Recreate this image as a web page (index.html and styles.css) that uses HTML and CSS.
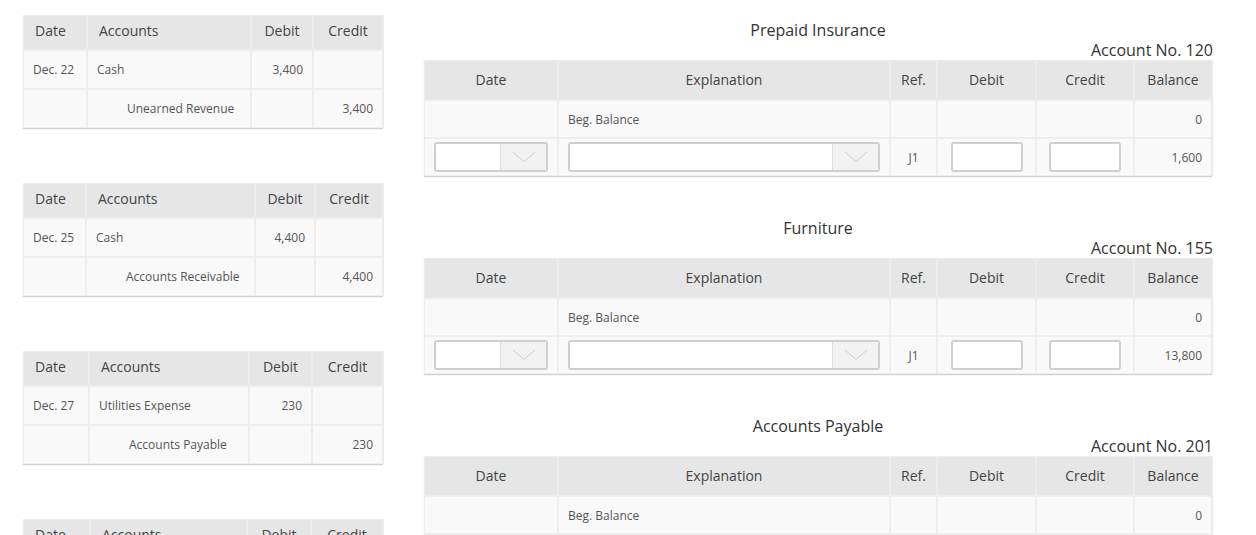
FILE: index.html
```html
<!DOCTYPE html>
<html>
<head>
<meta charset="utf-8">
<link rel="stylesheet" href="styles.css">
</head>
<body>
<div class="page">
  <div class="journal">
    <table class="jt">
      <colgroup><col class="a1"><col class="b1"><col class="c1"><col class="d1"></colgroup>
      <thead><tr><th>Date</th><th>Accounts</th><th class="jn">Debit</th><th class="jn">Credit</th></tr></thead>
      <tbody>
        <tr><td>Dec. 22</td><td>Cash</td><td class="num">3,400</td><td></td></tr>
        <tr><td></td><td class="ind">Unearned Revenue</td><td></td><td class="num">3,400</td></tr>
      </tbody>
    </table>
    <table class="jt">
      <colgroup><col class="a2"><col class="b2"><col class="c2"><col class="d2"></colgroup>
      <thead><tr><th>Date</th><th>Accounts</th><th class="jn">Debit</th><th class="jn">Credit</th></tr></thead>
      <tbody>
        <tr><td>Dec. 25</td><td>Cash</td><td class="num">4,400</td><td></td></tr>
        <tr><td></td><td class="ind">Accounts Receivable</td><td></td><td class="num">4,400</td></tr>
      </tbody>
    </table>
    <table class="jt">
      <colgroup><col class="a3"><col class="b3"><col class="c3"><col class="d3"></colgroup>
      <thead><tr><th>Date</th><th>Accounts</th><th class="jn">Debit</th><th class="jn">Credit</th></tr></thead>
      <tbody>
        <tr><td>Dec. 27</td><td>Utilities Expense</td><td class="num">230</td><td></td></tr>
        <tr><td></td><td class="ind">Accounts Payable</td><td></td><td class="num">230</td></tr>
      </tbody>
    </table>
    <table class="jt">
      <colgroup><col class="a4"><col class="b4"><col class="c4"><col class="d4"></colgroup>
      <thead><tr><th>Date</th><th>Accounts</th><th class="jn">Debit</th><th class="jn">Credit</th></tr></thead>
      <tbody>
        <tr><td>Dec. 31</td><td>Cash</td><td class="num">1,000</td><td></td></tr>
        <tr><td></td><td class="ind">Service Revenue</td><td></td><td class="num">1,000</td></tr>
      </tbody>
    </table>
  </div>

  <div class="ledgers">
    <section class="ledger">
      <h2 class="ltitle">Prepaid Insurance</h2>
      <div class="lno">Account No. 120</div>
      <table class="lt">
        <colgroup><col class="c-date"><col class="c-exp"><col class="c-ref"><col class="c-deb"><col class="c-cre"><col class="c-bal"></colgroup>
        <thead><tr><th>Date</th><th>Explanation</th><th>Ref.</th><th>Debit</th><th>Credit</th><th>Balance</th></tr></thead>
        <tbody>
          <tr><td></td><td>Beg. Balance</td><td></td><td></td><td></td><td class="num">0</td></tr>
          <tr>
            <td><div class="sel"><span class="sel-val"></span><span class="sel-btn"><svg width="24" height="12" viewBox="0 0 24 12"><polyline points="1,1 12,10.5 23,1" fill="none" stroke="#cdcdcd" stroke-width="1"/></svg></span></div></td>
            <td><div class="sel"><span class="sel-val"></span><span class="sel-btn"><svg width="24" height="12" viewBox="0 0 24 12"><polyline points="1,1 12,10.5 23,1" fill="none" stroke="#cdcdcd" stroke-width="1"/></svg></span></div></td>
            <td class="ctr">J1</td>
            <td class="ctr"><span class="inp"></span></td>
            <td class="ctr"><span class="inp"></span></td>
            <td class="num">1,600</td>
          </tr>
        </tbody>
      </table>
    </section>

    <section class="ledger">
      <h2 class="ltitle">Furniture</h2>
      <div class="lno">Account No. 155</div>
      <table class="lt">
        <colgroup><col class="c-date"><col class="c-exp"><col class="c-ref"><col class="c-deb"><col class="c-cre"><col class="c-bal"></colgroup>
        <thead><tr><th>Date</th><th>Explanation</th><th>Ref.</th><th>Debit</th><th>Credit</th><th>Balance</th></tr></thead>
        <tbody>
          <tr><td></td><td>Beg. Balance</td><td></td><td></td><td></td><td class="num">0</td></tr>
          <tr>
            <td><div class="sel"><span class="sel-val"></span><span class="sel-btn"><svg width="24" height="12" viewBox="0 0 24 12"><polyline points="1,1 12,10.5 23,1" fill="none" stroke="#cdcdcd" stroke-width="1"/></svg></span></div></td>
            <td><div class="sel"><span class="sel-val"></span><span class="sel-btn"><svg width="24" height="12" viewBox="0 0 24 12"><polyline points="1,1 12,10.5 23,1" fill="none" stroke="#cdcdcd" stroke-width="1"/></svg></span></div></td>
            <td class="ctr">J1</td>
            <td class="ctr"><span class="inp"></span></td>
            <td class="ctr"><span class="inp"></span></td>
            <td class="num">13,800</td>
          </tr>
        </tbody>
      </table>
    </section>

    <section class="ledger">
      <h2 class="ltitle">Accounts Payable</h2>
      <div class="lno">Account No. 201</div>
      <table class="lt">
        <colgroup><col class="c-date"><col class="c-exp"><col class="c-ref"><col class="c-deb"><col class="c-cre"><col class="c-bal"></colgroup>
        <thead><tr><th>Date</th><th>Explanation</th><th>Ref.</th><th>Debit</th><th>Credit</th><th>Balance</th></tr></thead>
        <tbody>
          <tr><td></td><td>Beg. Balance</td><td></td><td></td><td></td><td class="num">0</td></tr>
          <tr>
            <td><div class="sel"><span class="sel-val"></span><span class="sel-btn"><svg width="24" height="12" viewBox="0 0 24 12"><polyline points="1,1 12,10.5 23,1" fill="none" stroke="#cdcdcd" stroke-width="1"/></svg></span></div></td>
            <td><div class="sel"><span class="sel-val"></span><span class="sel-btn"><svg width="24" height="12" viewBox="0 0 24 12"><polyline points="1,1 12,10.5 23,1" fill="none" stroke="#cdcdcd" stroke-width="1"/></svg></span></div></td>
            <td class="ctr">J1</td>
            <td class="ctr"><span class="inp"></span></td>
            <td class="ctr"><span class="inp"></span></td>
            <td class="num">230</td>
          </tr>
        </tbody>
      </table>
    </section>
  </div>
</div>
</body>
</html>
```

FILE: styles.css
```css
html, body {
  margin: 0;
  padding: 0;
  background: #fff;
  overflow: hidden;
}
body {
  font-family: "Open Sans", "Liberation Sans", sans-serif;
  color: #555;
}
.page {
  display: flex;
  align-items: flex-start;
  padding-left: 23px;
  gap: 41px;
}
.journal {
  width: 360px;
  display: flex;
  flex-direction: column;
  gap: 55px;
  padding-top: 15px;
}
.jt, .lt {
  border-collapse: separate;
  border-spacing: 0;
  table-layout: fixed;
  box-shadow: 0 1px 1px rgba(0,0,0,0.18), 1px 0 1px rgba(0,0,0,0.06);
}
.jt {
  width: 360px;
}
.a1 { width: 64px; } .b1 { width: 164px; } .c1 { width: 62px; } .d1 { width: 70px; }
.a2 { width: 63px; } .b2 { width: 169px; } .c2 { width: 60px; } .d2 { width: 68px; }
.a3 { width: 66px; } .b3 { width: 160px; } .c3 { width: 63px; } .d3 { width: 71px; }
.a4 { width: 67px; } .b4 { width: 157px; } .c4 { width: 64px; } .d4 { width: 72px; }
.jt th, .lt th {
  background: #e6e6e6;
  color: #444;
  font-size: 14px;
  font-weight: 500;
  border: 1px solid #ececec;
  text-align: left;
}
.jt th {
  height: 29px;
  padding: 0 11px 4px;
}
.jt th.jn {
  text-align: center;
  padding: 0 0 4px;
}
.jt td, .lt td {
  background: #f9f9f9;
  border: 1px solid #eeeeee;
  font-size: 12px;
  color: #555;
}
.jt td {
  height: 37px;
  padding: 0 9px;
  white-space: nowrap;
}
.jt td.ind {
  padding-left: 39px;
}
.num {
  text-align: right;
}
.ledgers {
  width: 788px;
  padding-top: 19px;
  display: flex;
  flex-direction: column;
  gap: 41px;
}
.ltitle {
  margin: 0;
  font-size: 16px;
  font-weight: 400;
  line-height: 22px;
  text-align: center;
  color: #333;
}
.lno {
  font-size: 16px;
  line-height: 20px;
  text-align: right;
  color: #333;
  margin-right: -1px;
  margin-top: -1px;
}
.lt {
  width: 788px;
}
.c-date { width: 134px; }
.c-exp { width: 332px; }
.c-ref { width: 47px; }
.c-deb { width: 99px; }
.c-cre { width: 98px; }
.c-bal { width: 78px; }
.lt th {
  height: 36px;
  text-align: center;
  padding: 0 0 2px;
}
.lt td {
  height: 36px;
  padding: 0 9px;
}
.lt td.ctr {
  text-align: center;
  padding: 0;
}
.sel {
  display: flex;
  height: 26px;
  border: 2px solid #cfcfcf;
  border-radius: 3px;
  background: #fff;
  overflow: hidden;
}
.sel-val {
  flex: 1;
}
.sel-btn {
  width: 45px;
  background: #f2f2f2;
  border-left: 1px solid #dcdcdc;
  display: flex;
  align-items: center;
  justify-content: center;
}
.inp {
  display: inline-block;
  vertical-align: middle;
  width: 68px;
  height: 26px;
  border: 2px solid #cfcfcf;
  border-radius: 3px;
  background: #fff;
}
```
